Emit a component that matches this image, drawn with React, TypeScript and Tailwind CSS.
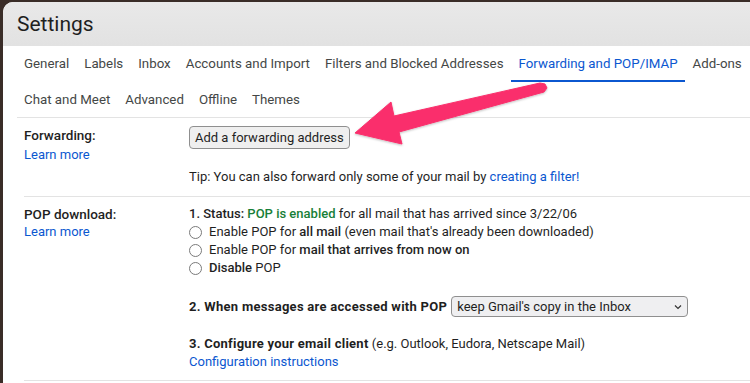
import React from "react";

const tabsRow1 = [
  "General",
  "Labels",
  "Inbox",
  "Accounts and Import",
  "Filters and Blocked Addresses",
  "Forwarding and POP/IMAP",
  "Add-ons",
];
const tabsRow2 = ["Chat and Meet", "Advanced", "Offline", "Themes"];

function Tab({ label, active }: { label: string; active?: boolean }) {
  return (
    <div
      className={
        "h-full shrink-0 whitespace-nowrap flex items-center px-[7.5px] border-b-2 " +
        (active ? "border-[#0b57d0] text-[#0b57d0]" : "border-transparent text-[#444746]")
      }
    >
      <span className="pt-[2px]">{label}</span>
    </div>
  );
}

function Radio({ children }: { children: React.ReactNode }) {
  return (
    <div className="h-[18px] flex items-center whitespace-nowrap">
      <span className="w-[13px] h-[13px] rounded-full border-[1.5px] border-[#7a7a7a] bg-white mr-[7px] shrink-0" />
      <span>{children}</span>
    </div>
  );
}

export default function App() {
  return (
    <div
      className="relative w-[750px] h-[383px] overflow-hidden bg-[#3a2d28] pt-[2px] pl-[3px]"
      style={{ fontFamily: "Roboto, Arial, sans-serif" }}
    >
      <div className="h-full w-full bg-white rounded-tl-[10px] overflow-hidden flex flex-col">
        {/* header */}
        <div className="h-[44px] shrink-0 bg-gradient-to-b from-[#e9e9e9] to-[#e2e2e2] pl-[14px] flex items-center">
          <span className="text-[21px] text-[#1f1f1f] leading-none pt-[1px]">Settings</span>
        </div>
        {/* tabs */}
        <div className="pl-[13.5px] text-[13.3px]">
          <div className="h-[36px] flex">
            {tabsRow1.map((t) => (
              <Tab key={t} label={t} active={t === "Forwarding and POP/IMAP"} />
            ))}
          </div>
          <div className="h-[36px] flex border-b border-[#e3e3e3]">
            {tabsRow2.map((t) => (
              <Tab key={t} label={t} />
            ))}
          </div>
        </div>
        {/* content */}
        <div className="ml-[21px] text-[13px] text-[#1f1f1f] leading-[18px] whitespace-nowrap">
          {/* Forwarding */}
          <div className="flex pt-[8px] pb-[10px] border-b border-[#e3e3e3]">
            <div className="w-[165px] shrink-0">
              <div className="font-medium text-[13.5px]">Forwarding:</div>
              <div className="mt-[2px] text-[#0b57d0]">Learn more</div>
            </div>
            <div>
              <button className="h-[23px] px-[5px] bg-[#efefef] border border-[#8f8f8f] rounded-[4px] text-[13px] text-[#1f1f1f] leading-none">
                Add a forwarding address
              </button>
              <div className="mt-[19px]">
                Tip: You can also forward only some of your mail by{" "}
                <span className="text-[#0b57d0]">creating a filter!</span>
              </div>
            </div>
          </div>
          {/* POP */}
          <div className="flex pt-[8px] pb-[9px] border-b border-[#e3e3e3]">
            <div className="w-[165px] shrink-0">
              <div className="font-medium text-[13.5px]">POP download:</div>
              <div className="text-[#0b57d0]">Learn more</div>
            </div>
            <div>
              <div>
                <span className="font-medium">1. Status: </span>
                <span className="font-medium text-[#188038]">POP is enabled</span> for all mail that has
                arrived since 3/22/06
              </div>
              <Radio>
                Enable POP for <span className="font-medium">all mail</span> (even mail that's already
                been downloaded)
              </Radio>
              <Radio>
                Enable POP for <span className="font-medium">mail that arrives from now on</span>
              </Radio>
              <Radio>
                <span className="font-medium">Disable</span> POP
              </Radio>
              <div className="mt-[19px] h-[21px] flex items-center">
                <span className="font-bold tracking-[0.28px]">2. When messages are accessed with POP</span>
                <div className="ml-[4px] h-[21px] w-[237px] bg-[#efeff1] border border-[#8f8f8f] rounded-[4px] flex items-center justify-between pl-[5px] pr-[5px]">
                  <span>keep Gmail's copy in the Inbox</span>
                  <svg width="8" height="6" viewBox="0 0 8 6">
                    <path d="M1 1.5 L4 4.5 L7 1.5" fill="none" stroke="#333" strokeWidth="1.2" />
                  </svg>
                </div>
              </div>
              <div className="mt-[18px]">
                <span className="font-bold tracking-[0.25px]">3. Configure your email client</span> (e.g.
                Outlook, Eudora, Netscape Mail)
              </div>
              <div className="text-[#0b57d0]">Configuration instructions</div>
            </div>
          </div>
        </div>
      </div>
      {/* annotation arrow */}
      <svg
        className="absolute left-0 top-0 pointer-events-none"
        width="750"
        height="383"
        viewBox="0 0 750 383"
      >
        <defs>
          <filter id="sh" x="-10%" y="-10%" width="120%" height="130%">
            <feDropShadow dx="0" dy="1" stdDeviation="1.2" floodColor="#000" floodOpacity="0.25" />
          </filter>
        </defs>
        <polygon
          points="355,133 391,102 394,116 540,83 545,84 547,88 544,92 399,132 402,144"
          fill="#fa2f6c"
          stroke="#fa2f6c"
          strokeWidth="1"
          strokeLinejoin="round"
          filter="url(#sh)"
        />
      </svg>
    </div>
  );
}
